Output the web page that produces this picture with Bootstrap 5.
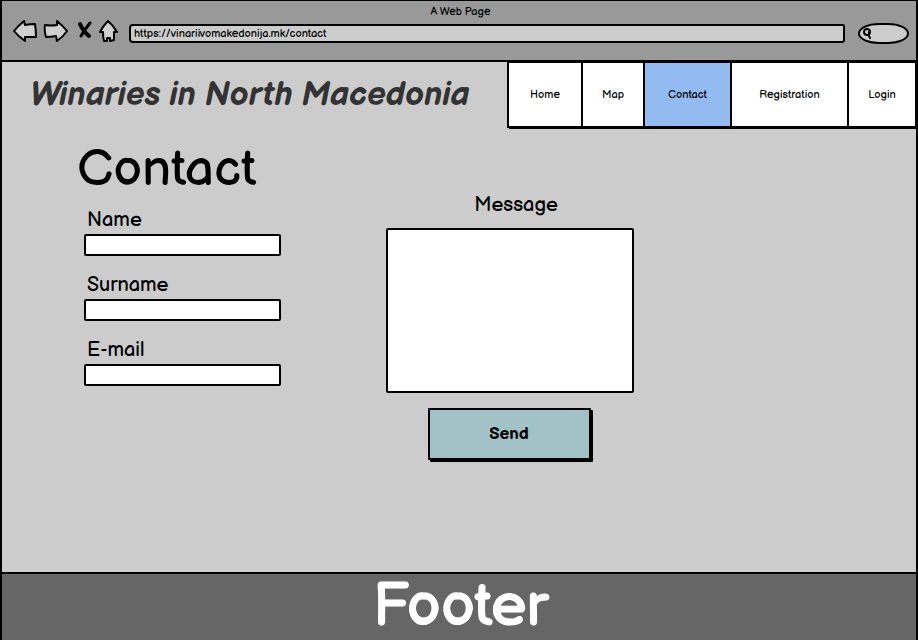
<!DOCTYPE html>
<html lang="en">
<head>
<meta charset="utf-8">
<meta name="viewport" content="width=device-width, initial-scale=1">
<title>Winaries in North Macedonia - Contact</title>
<link href="https://cdn.jsdelivr.net/npm/bootstrap@5.3.0/dist/css/bootstrap.min.css" rel="stylesheet">
<style>
  body { font-family: "Balsamiq Sans", Lato, sans-serif; color: #000; background: #ccc; }
  .page-frame { border: 2px solid #000; border-top-width: 1px; border-bottom: 0; }
  .browser-bar { background: #999; border-bottom: 2px solid #000; padding: 1px 7px 16px 10px; }
  .window-title { font-size: 11px; line-height: 20px; }
  .toolbar-row { margin-top: -5px; }
  .tool-btn { background: none; border: 0; padding: 0; line-height: 0; }
  .address { font-size: 11px; height: 19px; margin: 6px 0 0 9px; padding: 0 3px; background: #ccc; border: 2px solid #000; border-radius: 4px 2px 3px 4px; color: #000; }
  .search-pill { width: 51px; height: 21px; margin: 6px 0 0 13px; background: #ccc; border: 2px solid #000; border-radius: 22px / 11px; padding-left: 2px; }
  .search-pill input { background: none; border: 0; outline: 0; font-size: 10px; }
  .site-title { font-size: 33px; line-height: 40px; color: #333; font-style: italic; font-weight: 700; margin: 13px 0 0 28px; }
  .site-nav { width: 409px; border: 2px solid #000; border-width: 1px 1px 2px 2px; background: #000; gap: 2px; box-shadow: 2px 1px 0 #000; }
  .site-nav .nav-link { background: #fff; color: #000; font-size: 11px; line-height: 16px; padding: 24px 0 23px; text-align: center; }
  .site-nav .nav-link.active { background: #94baf2; }
  .w-home { flex: 72 1 0; } .w-map { flex: 60 1 0; } .w-contact { flex: 85 1 0; }
  .w-reg { flex: 115 1 0; } .w-login { flex: 66 1 0; }
  .contact-area { padding: 12px 16px 32px 82px; }
  .page-heading { font-size: 51px; line-height: 60px; font-weight: 400; margin: 0 0 0 -7px; }
  .contact-form { column-gap: 105px; }
  .fields { flex: 0 1 197px; gap: 15px; padding-top: 6px; }
  .message { flex: 0 1 248px; margin-top: -9px; }
  .sketch-label { font-size: 20px; line-height: 28px; }
  .fields .sketch-label { padding-left: 3px; }
  .message .sketch-label { padding-left: 12px; }
  .form-control.sketch-field { height: 22px; min-height: 22px; border: 2px solid #000; border-radius: 2px; padding: 0 6px; font-size: 14px; background: #fff; }
  .form-control.sketch-area { height: 165px; margin-top: 9px; border: 2px solid #000; border-radius: 2px; background: #fff; resize: none; }
  .send-btn { width: 163px; margin: 15px 2px 2px 0; padding: 12px 0; font-size: 17px; line-height: 24px; font-weight: 700; color: #000; background: #a2c2c7; border: 2px solid #000; border-radius: 1px; box-shadow: 2px 2px 0 #000; }
  .site-footer { background: #666; border-top: 2px solid #000; color: #fff; font-size: 60px; line-height: 66px; padding-left: 3px; -webkit-text-stroke: 1px #fff; }
</style>
<script src="https://cdn.jsdelivr.net/npm/bootstrap@5.3.0/dist/js/bootstrap.bundle.min.js" defer></script>
</head>
<body>
<div class="page-frame min-vh-100 d-flex flex-column">
  <header>
    <div class="browser-bar">
      <div class="window-title text-center">A Web Page</div>
      <div class="toolbar-row d-flex align-items-center">
        <button class="tool-btn" type="button" aria-label="Back">
          <svg width="26" height="24" viewBox="0 0 26 24" fill="#d0d0d0" stroke="#000" stroke-width="2" stroke-linejoin="round"><path d="M2 12 Q6 7 12 2 L13 6 Q18 5 23 5 Q24 11 24 18 L13 18 L13 22 Q6 17 2 12Z"/></svg>
        </button>
        <button class="tool-btn ms-1" type="button" aria-label="Forward">
          <svg width="28" height="24" viewBox="0 0 28 24" fill="#d0d0d0" stroke="#000" stroke-width="2" stroke-linejoin="round"><path d="M25 12 Q21 7 15 2 L15 6 Q9 7 3 6 Q2 11 4 18 Q9 18 14 17 L15 22 Q21 18 25 12Z"/></svg>
        </button>
        <button class="tool-btn ms-1" type="button" aria-label="Stop">
          <svg width="22" height="24" viewBox="0 0 22 24" fill="none" stroke="#000" stroke-linecap="round"><path d="M6 5 Q9 12 15 17" stroke-width="4"/><path d="M16 4 Q11 10 7 17" stroke-width="3"/></svg>
        </button>
        <button class="tool-btn" type="button" aria-label="Home">
          <svg width="24" height="26" viewBox="0 0 24 26" fill="#d0d0d0" stroke="#000" stroke-width="2" stroke-linejoin="round"><path d="M12 3 Q7 8 4 14 L7 14 Q7 19 8 23 L11 23 L11 20 L14 20 L14 23 L18 22 L18 14 L21 14 Q17 7 12 3Z"/></svg>
        </button>
        <input class="address flex-grow-1" type="text" aria-label="Address" value="https://vinariivomakedonija.mk/contact">
        <label class="search-pill d-flex align-items-center">
          <svg width="11" height="13" viewBox="0 0 11 13" fill="none" stroke="#000" stroke-width="2" stroke-linecap="round" class="flex-shrink-0"><ellipse cx="5" cy="5" rx="3" ry="3"/><path d="M7 5 L7 9 L8 11"/></svg>
          <input class="w-100 p-0" type="search" aria-label="Search">
        </label>
      </div>
    </div>
    <div class="d-flex justify-content-between align-items-start">
      <div class="site-title text-nowrap">Winaries in North Macedonia</div>
      <nav class="site-nav d-flex" aria-label="Main">
        <a class="nav-link w-home" href="#">Home</a>
        <a class="nav-link w-map" href="#">Map</a>
        <a class="nav-link w-contact active" href="#" aria-current="page">Contact</a>
        <a class="nav-link w-reg" href="#">Registration</a>
        <a class="nav-link w-login" href="#">Login</a>
      </nav>
    </div>
  </header>
  <main class="contact-area flex-grow-1">
    <h1 class="page-heading">Contact</h1>
    <form class="contact-form d-flex align-items-start">
      <div class="fields d-flex flex-column">
        <div>
          <label class="sketch-label d-block" for="name">Name</label>
          <input class="form-control sketch-field" id="name" type="text">
        </div>
        <div>
          <label class="sketch-label d-block" for="surname">Surname</label>
          <input class="form-control sketch-field" id="surname" type="text">
        </div>
        <div>
          <label class="sketch-label d-block" for="email">E-mail</label>
          <input class="form-control sketch-field" id="email" type="email">
        </div>
      </div>
      <div class="message text-center">
        <label class="sketch-label d-block" for="message">Message</label>
        <textarea class="form-control sketch-area" id="message"></textarea>
        <button class="send-btn" type="button">Send</button>
      </div>
    </form>
  </main>
  <footer class="site-footer text-center">Footer</footer>
</div>
</body>
</html>
